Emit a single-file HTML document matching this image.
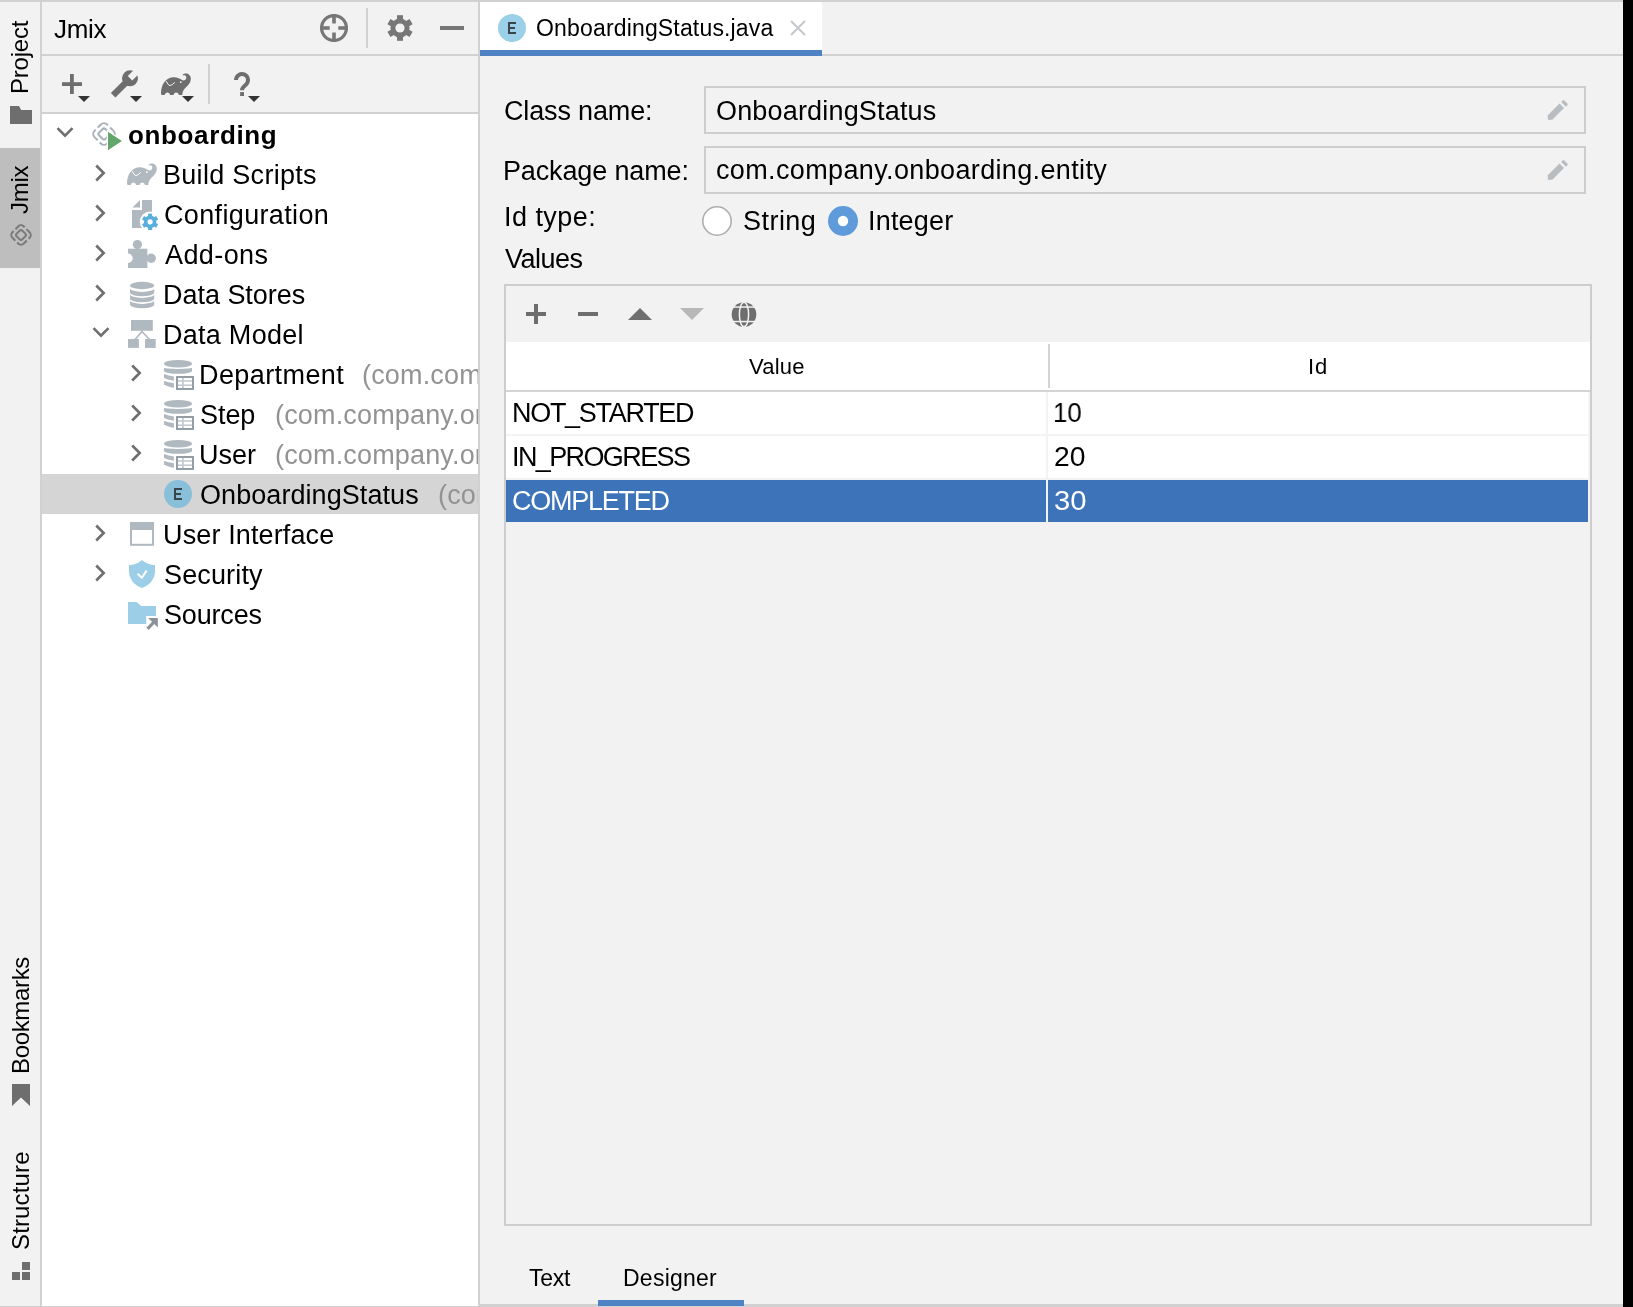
<!DOCTYPE html>
<html><head><meta charset="utf-8"><style>
html,body{margin:0;padding:0;width:1633px;height:1307px;overflow:hidden;background:#f2f2f2}
.ov{position:absolute;left:0;top:0}
.t{position:absolute;font-family:"Liberation Sans",sans-serif;line-height:1;white-space:pre;color:#000;will-change:transform}
.clip{position:absolute;left:42px;top:114px;width:436px;height:1192px;overflow:hidden}
.clip .t{margin-left:-42px;margin-top:-114px}
</style></head><body>
<svg class="ov" width="1633" height="1307"><rect x="0" y="0" width="1633" height="1307" fill="#f2f2f2"/><rect x="42" y="114" width="436" height="1192" fill="#fff"/><rect x="42" y="474" width="436" height="40" fill="#d5d5d5"/><rect x="0" y="0" width="1623" height="2" fill="#d1d1d1"/><rect x="0" y="148" width="40" height="120" fill="#bebebe"/><rect x="40" y="0" width="2" height="1307" fill="#d1d1d1"/><rect x="42" y="54" width="436" height="2" fill="#d1d1d1"/><rect x="42" y="112" width="436" height="2" fill="#d1d1d1"/><rect x="478" y="0" width="2" height="1307" fill="#d1d1d1"/><rect x="480" y="2" width="342" height="48" fill="#fff"/><rect x="480" y="50" width="342" height="6" fill="#4f83c4"/><rect x="822" y="54" width="801" height="2" fill="#d1d1d1"/><rect x="705" y="87" width="880" height="46" fill="none" stroke="#cdcdcd" stroke-width="2"/><rect x="705" y="147" width="880" height="46" fill="none" stroke="#cdcdcd" stroke-width="2"/><rect x="505" y="285" width="1086" height="940" fill="none" stroke="#cdcdcd" stroke-width="2"/><rect x="506" y="342" width="1084" height="48" fill="#fff"/><rect x="506" y="390" width="1084" height="2" fill="#d4d4d4"/><rect x="1048" y="344" width="2" height="44" fill="#d4d4d4"/><rect x="506" y="392" width="1084" height="132" fill="#fff"/><rect x="506" y="434" width="1084" height="2" fill="#f3f3f3"/><rect x="506" y="478" width="1084" height="2" fill="#f3f3f3"/><rect x="1046" y="392" width="2" height="130" fill="#f3f3f3"/><rect x="1588" y="392" width="2" height="130" fill="#f3f3f3"/><rect x="506" y="522" width="1084" height="2" fill="#f2f2f2"/><rect x="506" y="480" width="540" height="42" fill="#3d74b9"/><rect x="1048" y="480" width="540" height="42" fill="#3d74b9"/><rect x="0" y="1306" width="1623" height="1" fill="#d1d1d1"/><rect x="480" y="1304" width="1143" height="3" fill="#d1d1d1"/><rect x="598" y="1300" width="146" height="6" fill="#4f83c4"/><rect x="1623" y="0" width="10" height="1307" fill="#000"/></svg>
<svg class="ov" width="1633" height="1307"><path d="M10,106H19L21.2,110H32V124H10Z" fill="#6e6e6e"/><path d="M12,1084H30V1106L21,1097.5L12,1106Z" fill="#6e6e6e"/><rect x="22" y="1262" width="8" height="8" fill="#6e6e6e"/><rect x="12" y="1272" width="8" height="8" fill="#6e6e6e"/><rect x="22" y="1272" width="8" height="8" fill="#6e6e6e"/><rect x="-8.030" y="-8.030" width="16.060" height="16.060" rx="4.000" fill="none" stroke="#7a7a7a" stroke-width="2.0" stroke-dasharray="11.743 2.600" stroke-dashoffset="-3.700" transform="translate(21 235) rotate(45)"/><rect x="-4.050" y="-4.050" width="8.100" height="8.100" rx="2.000" fill="none" stroke="#7a7a7a" stroke-width="2.0" transform="translate(21 235) rotate(45)"/><circle cx="334" cy="28" r="12.4" fill="none" stroke="#777" stroke-width="3.2"/><rect x="332.2" y="14" width="3.6" height="9.5" fill="#777"/><rect x="332.2" y="32.5" width="3.6" height="9.5" fill="#777"/><rect x="320" y="26.2" width="9.7" height="3.6" fill="#777"/><rect x="338.3" y="26.2" width="9.7" height="3.6" fill="#777"/><rect x="366" y="8" width="2" height="40" fill="#d1d1d1"/><circle cx="400" cy="28" r="9.6" fill="#777"/><rect x="397" y="15.2" width="6" height="25.6" fill="#777" transform="rotate(0 400 28)"/><rect x="397" y="15.2" width="6" height="25.6" fill="#777" transform="rotate(60 400 28)"/><rect x="397" y="15.2" width="6" height="25.6" fill="#777" transform="rotate(120 400 28)"/><circle cx="400" cy="28" r="4.6" fill="#f2f2f2"/><rect x="440" y="26" width="24" height="4" fill="#777"/><rect x="62" y="82.2" width="20" height="3.8" fill="#6e6e6e"/><rect x="70" y="74" width="3.8" height="20" fill="#6e6e6e"/><path d="M78,96H90L84,102Z" fill="#333"/><circle cx="130" cy="78.3" r="8" fill="#6e6e6e"/><path d="M113.15,95.3L128,80.5" stroke="#6e6e6e" stroke-width="6.4"/><path d="M127.77,76.07L134.84,69.0L139.3,73.46L132.23,80.53Z" fill="#f2f2f2"/><path d="M130,96H142L136,102Z" fill="#333"/><g transform="translate(161,73)"><path d="M0,20.5C0,12 4,5 12,4.3C16,4 19,5.8 21,7C23,8 25,7 25.3,5C25.6,3 24,1.6 22.2,2.6L21.6,1.4C25,-0.8 30,1 29.8,6C29.6,10 27.5,12 24.5,14.8C22.5,16.6 21.4,19 21.3,22L17.8,22C17.8,18.6 12.6,18.6 12.6,22L9,22C9,18.6 3.8,18.6 3.8,22L1.4,22Q0,22 0,20.5Z" fill="#6e6e6e"/><path d="M5,8Q7,12.5 9,12.6Q11,12.2 13.8,9.4" fill="none" stroke="#f2f2f2" stroke-width="1"/><circle cx="19.8" cy="9.2" r="0.9" fill="#f2f2f2"/></g><path d="M182,96H194L188,102Z" fill="#333"/><rect x="208" y="64" width="2" height="40" fill="#d1d1d1"/><path d="M236,80A6,6 0 1 1 246.4,84.1L243.6,86.9Q242,88.5 242,90.2" fill="none" stroke="#6e6e6e" stroke-width="3.9"/><rect x="240.1" y="92.1" width="3.9" height="3.9" fill="#6e6e6e"/><path d="M248,96H260L254,102Z" fill="#333"/><path d="M57.5,128.2L65,135.7L72.5,128.2" fill="none" stroke="#6e6e6e" stroke-width="2.6"/><path d="M96.2,165.5L103.7,173.0L96.2,180.5" fill="none" stroke="#6e6e6e" stroke-width="2.6"/><path d="M96.2,205.5L103.7,213.0L96.2,220.5" fill="none" stroke="#6e6e6e" stroke-width="2.6"/><path d="M96.2,245.5L103.7,253.0L96.2,260.5" fill="none" stroke="#6e6e6e" stroke-width="2.6"/><path d="M96.2,285.5L103.7,293.0L96.2,300.5" fill="none" stroke="#6e6e6e" stroke-width="2.6"/><path d="M96.2,525.5L103.7,533.0L96.2,540.5" fill="none" stroke="#6e6e6e" stroke-width="2.6"/><path d="M96.2,565.5L103.7,573.0L96.2,580.5" fill="none" stroke="#6e6e6e" stroke-width="2.6"/><path d="M93.5,328.2L101,335.7L108.5,328.2" fill="none" stroke="#6e6e6e" stroke-width="2.6"/><path d="M132.2,365.5L139.7,373.0L132.2,380.5" fill="none" stroke="#6e6e6e" stroke-width="2.6"/><path d="M132.2,405.5L139.7,413.0L132.2,420.5" fill="none" stroke="#6e6e6e" stroke-width="2.6"/><path d="M132.2,445.5L139.7,453.0L132.2,460.5" fill="none" stroke="#6e6e6e" stroke-width="2.6"/><rect x="-8.913" y="-8.913" width="17.827" height="17.827" rx="4.440" fill="none" stroke="#a9b2ba" stroke-width="2.0" stroke-dasharray="13.035 2.886" stroke-dashoffset="-4.107" transform="translate(104 134) rotate(45)"/><rect x="-4.495" y="-4.495" width="8.991" height="8.991" rx="2.220" fill="none" stroke="#a9b2ba" stroke-width="2.0" transform="translate(104 134) rotate(45)"/><path d="M108,132L121.6,141L108,150Z" fill="#62a66c" stroke="#fff" stroke-width="2.6" stroke-linejoin="miter" paint-order="stroke"/><path d="M108,132L121.6,141L108,150Z" fill="#62a66c"/><g transform="translate(127,163)"><path d="M0,20.5C0,12 4,5 12,4.3C16,4 19,5.8 21,7C23,8 25,7 25.3,5C25.6,3 24,1.6 22.2,2.6L21.6,1.4C25,-0.8 30,1 29.8,6C29.6,10 27.5,12 24.5,14.8C22.5,16.6 21.4,19 21.3,22L17.8,22C17.8,18.6 12.6,18.6 12.6,22L9,22C9,18.6 3.8,18.6 3.8,22L1.4,22Q0,22 0,20.5Z" fill="#b0b8c0"/><path d="M5,8Q7,12.5 9,12.6Q11,12.2 13.8,9.4" fill="none" stroke="#fff" stroke-width="1"/><circle cx="19.8" cy="9.2" r="0.9" fill="#fff"/></g><path d="M132.5,207.6L140,200V207.6Z" fill="#b0b8c0"/><path d="M142,200H152V228H132V210H142Z" fill="#b0b8c0"/><circle cx="150.1" cy="221.8" r="10.3" fill="#fff"/><circle cx="150.1" cy="221.8" r="6.3" fill="#5aaedb"/><rect x="148.1" y="213.6" width="4" height="16.4" fill="#5aaedb" transform="rotate(0 150.1 221.8)"/><rect x="148.1" y="213.6" width="4" height="16.4" fill="#5aaedb" transform="rotate(60 150.1 221.8)"/><rect x="148.1" y="213.6" width="4" height="16.4" fill="#5aaedb" transform="rotate(120 150.1 221.8)"/><circle cx="150.1" cy="221.8" r="2.6" fill="#fff"/><rect x="128" y="248.7" width="19.4" height="19.3" fill="#b0b8c0"/><circle cx="137.4" cy="244.6" r="4.6" fill="#b0b8c0"/><circle cx="151.2" cy="258.2" r="4.7" fill="#b0b8c0"/><circle cx="128" cy="258.2" r="4.7" fill="#fff"/><ellipse cx="142.1" cy="285.5" rx="12.1" ry="3.7" fill="#b0b8c0"/><path d="M130,288.2A12.1,3.7 0 0 0 154.2,288.2V292.59999999999997A12.1,3.7 0 0 1 130,292.59999999999997Z" fill="#b0b8c0"/><path d="M130,294.2A12.1,3.7 0 0 0 154.2,294.2V298.59999999999997A12.1,3.7 0 0 1 130,298.59999999999997Z" fill="#b0b8c0"/><path d="M130,300.2A12.1,3.7 0 0 0 154.2,300.2V304.59999999999997A12.1,3.7 0 0 1 130,304.59999999999997Z" fill="#b0b8c0"/><rect x="131" y="320" width="21.8" height="10.8" fill="#b0b8c0"/><rect x="128" y="339" width="10.9" height="8.9" fill="#b0b8c0"/><rect x="145" y="339" width="10.7" height="8.9" fill="#b0b8c0"/><path d="M135,339.5L142,331.5L149.5,339.5" fill="none" stroke="#b0b8c0" stroke-width="1.6"/><ellipse cx="178" cy="363.8" rx="14" ry="3.8" fill="#b0b8c0"/><path d="M164,367.8A14,1.1 0 0 0 192,367.8V370.9A14,2.9 0 0 1 164,370.9Z" fill="#b0b8c0"/><path d="M164,374Q168.5,375.6 173.9,376.4V380.7Q168.5,379.8 164,377.9Z" fill="#b0b8c0"/><path d="M164,381Q168.5,382.6 173.9,383.3V387.9Q168.5,386.9 164,384.8Z" fill="#b0b8c0"/><rect x="176" y="376" width="18" height="14" fill="#fff"/><rect x="177" y="377" width="16" height="12" fill="none" stroke="#939ea7" stroke-width="2"/><rect x="182" y="378" width="1.8" height="10" fill="#c6ccd1"/><rect x="178" y="380.2" width="14" height="1.6" fill="#c6ccd1"/><rect x="178" y="384.4" width="14" height="1.6" fill="#c6ccd1"/><ellipse cx="178" cy="403.8" rx="14" ry="3.8" fill="#b0b8c0"/><path d="M164,407.8A14,1.1 0 0 0 192,407.8V410.9A14,2.9 0 0 1 164,410.9Z" fill="#b0b8c0"/><path d="M164,414Q168.5,415.6 173.9,416.4V420.7Q168.5,419.8 164,417.9Z" fill="#b0b8c0"/><path d="M164,421Q168.5,422.6 173.9,423.3V427.9Q168.5,426.9 164,424.8Z" fill="#b0b8c0"/><rect x="176" y="416" width="18" height="14" fill="#fff"/><rect x="177" y="417" width="16" height="12" fill="none" stroke="#939ea7" stroke-width="2"/><rect x="182" y="418" width="1.8" height="10" fill="#c6ccd1"/><rect x="178" y="420.2" width="14" height="1.6" fill="#c6ccd1"/><rect x="178" y="424.4" width="14" height="1.6" fill="#c6ccd1"/><ellipse cx="178" cy="443.8" rx="14" ry="3.8" fill="#b0b8c0"/><path d="M164,447.8A14,1.1 0 0 0 192,447.8V450.9A14,2.9 0 0 1 164,450.9Z" fill="#b0b8c0"/><path d="M164,454Q168.5,455.6 173.9,456.4V460.7Q168.5,459.8 164,457.9Z" fill="#b0b8c0"/><path d="M164,461Q168.5,462.6 173.9,463.3V467.9Q168.5,466.9 164,464.8Z" fill="#b0b8c0"/><rect x="176" y="456" width="18" height="14" fill="#fff"/><rect x="177" y="457" width="16" height="12" fill="none" stroke="#939ea7" stroke-width="2"/><rect x="182" y="458" width="1.8" height="10" fill="#c6ccd1"/><rect x="178" y="460.2" width="14" height="1.6" fill="#c6ccd1"/><rect x="178" y="464.4" width="14" height="1.6" fill="#c6ccd1"/><circle cx="178" cy="494" r="14" fill="#8abfda"/><path d="M182,489H175V499H182M175,494H181" fill="none" stroke="#3a454b" stroke-width="2.0"/><rect x="131" y="523" width="22" height="21.8" fill="none" stroke="#b0b8c0" stroke-width="2"/><rect x="130" y="522" width="24" height="8" fill="#b0b8c0"/><path d="M142,560C138,563.5 134,565 129,565V571C129,579 134,585 142,588C150,585 155,579 155,571V565C150,565 146,563.5 142,560Z" fill="#9ccfe7"/><path d="M137.6,573.8L141.8,577.8L146.6,570.6" fill="none" stroke="#fff" stroke-width="2"/><path d="M128,602H136.5L141.4,606H156V616H146.2V624H128Z" fill="#9ccfe7"/><path d="M148.2,618H157.8V627.5Z" fill="#8a9299"/><path d="M147.5,628.8L154.5,621.5" stroke="#8a9299" stroke-width="3.2"/><circle cx="512" cy="28" r="14" fill="#9bd0e8"/><path d="M516,23H509V33H516M509,28H515" fill="none" stroke="#3a454b" stroke-width="2.0"/><path d="M791,21L805,35M805,21L791,35" stroke="#c3c8cb" stroke-width="2"/><path d="M1547.8,115.3L1559.5,103.6L1564,108.1L1552.3,119.8H1547.8Z" fill="#b8bdc1"/><path d="M1561.2,101.9L1562.6,100.5Q1563.5,99.6 1564.4,100.5L1567.4,103.5Q1568.3,104.4 1567.4,105.3L1565.9,106.8Z" fill="#b8bdc1"/><path d="M1547.8,175.3L1559.5,163.6L1564,168.1L1552.3,179.8H1547.8Z" fill="#b8bdc1"/><path d="M1561.2,161.9L1562.6,160.5Q1563.5,159.6 1564.4,160.5L1567.4,163.5Q1568.3,164.4 1567.4,165.3L1565.9,166.8Z" fill="#b8bdc1"/><circle cx="717" cy="221" r="14.2" fill="#fff" stroke="#adadad" stroke-width="1.6"/><circle cx="843" cy="221" r="15" fill="#5f9bdb"/><circle cx="843" cy="221" r="5.2" fill="#fff"/><rect x="526" y="312" width="20" height="4" fill="#6e6e6e"/><rect x="534" y="304" width="4" height="20" fill="#6e6e6e"/><rect x="578" y="312" width="20" height="4" fill="#6e6e6e"/><path d="M628,320H652L640,308Z" fill="#6e6e6e"/><path d="M680,308H704L692,320Z" fill="#b8b8b8"/><circle cx="744" cy="314.5" r="12.3" fill="#6e6e6e"/><ellipse cx="744" cy="314.5" rx="4.6" ry="12.3" fill="none" stroke="#f2f2f2" stroke-width="1.5"/><rect x="731" y="306.3" width="26" height="1.5" fill="#f2f2f2"/><rect x="731" y="320.8" width="26" height="1.5" fill="#f2f2f2"/></svg>
<span class="t" style="font-size:24px;letter-spacing:-0.217px;left:8.399999999999999px;top:94.1px;transform-origin:0 0;transform:rotate(-90deg);">Project</span><span class="t" style="font-size:24px;letter-spacing:-0.3px;left:8.399999999999999px;top:213.8px;transform-origin:0 0;transform:rotate(-90deg);">Jmix</span><span class="t" style="font-size:24px;letter-spacing:-0.337px;left:8.899999999999999px;top:1074.2px;transform-origin:0 0;transform:rotate(-90deg);">Bookmarks</span><span class="t" style="font-size:24px;letter-spacing:0.15px;left:8.7px;top:1250.2px;transform-origin:0 0;transform:rotate(-90deg);">Structure</span><span class="t" style="font-size:26px;letter-spacing:-0.3px;left:53.7px;top:16px;">Jmix</span><span class="t" style="font-size:23px;letter-spacing:0.165px;left:536.0px;top:17px;">OnboardingStatus.java</span><span class="t" style="font-size:26px;font-weight:700;letter-spacing:0.633px;left:127.7px;top:122px;">onboarding</span><span class="t" style="font-size:27px;letter-spacing:0.292px;left:163.1px;top:162px;">Build Scripts</span><span class="t" style="font-size:27px;letter-spacing:0.35px;left:164.0px;top:202px;">Configuration</span><span class="t" style="font-size:27px;letter-spacing:0.4px;left:165.0px;top:242px;">Add-ons</span><span class="t" style="font-size:27px;letter-spacing:-0.03px;left:163.0px;top:282px;">Data Stores</span><span class="t" style="font-size:27px;letter-spacing:0.267px;left:163.0px;top:322px;">Data Model</span><span class="t" style="font-size:27px;letter-spacing:0.411px;left:198.9px;top:362px;">Department</span><span class="t" style="font-size:27px;letter-spacing:-0.067px;left:199.9px;top:402px;">Step</span><span class="t" style="font-size:27px;letter-spacing:0.033px;left:198.9px;top:442px;">User</span><span class="t" style="font-size:27px;letter-spacing:0.067px;left:200.0px;top:482px;">OnboardingStatus</span><span class="t" style="font-size:27px;letter-spacing:0.131px;left:163.0px;top:522px;">User Interface</span><span class="t" style="font-size:27px;letter-spacing:0.143px;left:164.0px;top:562px;">Security</span><span class="t" style="font-size:27px;letter-spacing:-0.167px;left:164.0px;top:602px;">Sources</span><span class="t" style="font-size:27px;letter-spacing:-0.15px;left:504.2px;top:98px;">Class name:</span><span class="t" style="font-size:27px;letter-spacing:-0.142px;left:503.2px;top:158px;">Package name:</span><span class="t" style="font-size:27px;letter-spacing:0.173px;left:715.7px;top:98px;">OnboardingStatus</span><span class="t" style="font-size:27px;letter-spacing:0.361px;left:715.7px;top:157px;">com.company.onboarding.entity</span><span class="t" style="font-size:27px;letter-spacing:0.457px;left:503.7px;top:204px;">Id type:</span><span class="t" style="font-size:27px;letter-spacing:0.46px;left:742.5px;top:208px;">String</span><span class="t" style="font-size:27px;letter-spacing:0.183px;left:867.9px;top:208px;">Integer</span><span class="t" style="font-size:27px;letter-spacing:-0.5px;left:505.0px;top:246px;">Values</span><span class="t" style="font-size:22px;letter-spacing:0.225px;left:748.8px;top:356px;">Value</span><span class="t" style="font-size:22px;letter-spacing:1.0px;left:1307.8px;top:356px;">Id</span><span class="t" style="font-size:27px;letter-spacing:-1.3px;left:511.5px;top:400px;">NOT_STARTED</span><span class="t" style="font-size:27px;letter-spacing:-1.61px;left:511.5px;top:444px;">IN_PROGRESS</span><span class="t" style="font-size:27px;letter-spacing:-1.25px;color:#fff;left:512.0px;top:488px;">COMPLETED</span><span class="t" style="font-size:27px;transform-origin:0 0;transform:scaleX(0.9556);left:1053.09px;top:400px;">10</span><span class="t" style="font-size:27px;transform-origin:0 0;transform:scaleX(1.0464);left:1054.45px;top:444px;">20</span><span class="t" style="font-size:27px;transform-origin:0 0;transform:scaleX(1.0821);color:#fff;left:1053.92px;top:488px;">30</span><span class="t" style="font-size:23px;letter-spacing:-0.3px;left:529.1px;top:1267px;">Text</span><span class="t" style="font-size:23px;letter-spacing:0.243px;left:623.3px;top:1267px;">Designer</span>
<div class="clip"><span class="t" style="font-size:27px;letter-spacing:0.161px;color:#939393;left:362.3px;top:362px">(com.company.onboarding.entity)</span><span class="t" style="font-size:27px;letter-spacing:0.161px;color:#939393;left:274.7px;top:402px">(com.company.onboarding.entity)</span><span class="t" style="font-size:27px;letter-spacing:0.161px;color:#939393;left:274.7px;top:442px">(com.company.onboarding.entity)</span><span class="t" style="font-size:27px;letter-spacing:0.161px;color:#939393;left:438px;top:482px">(com.company.onboarding.entity)</span></div>
</body></html>
